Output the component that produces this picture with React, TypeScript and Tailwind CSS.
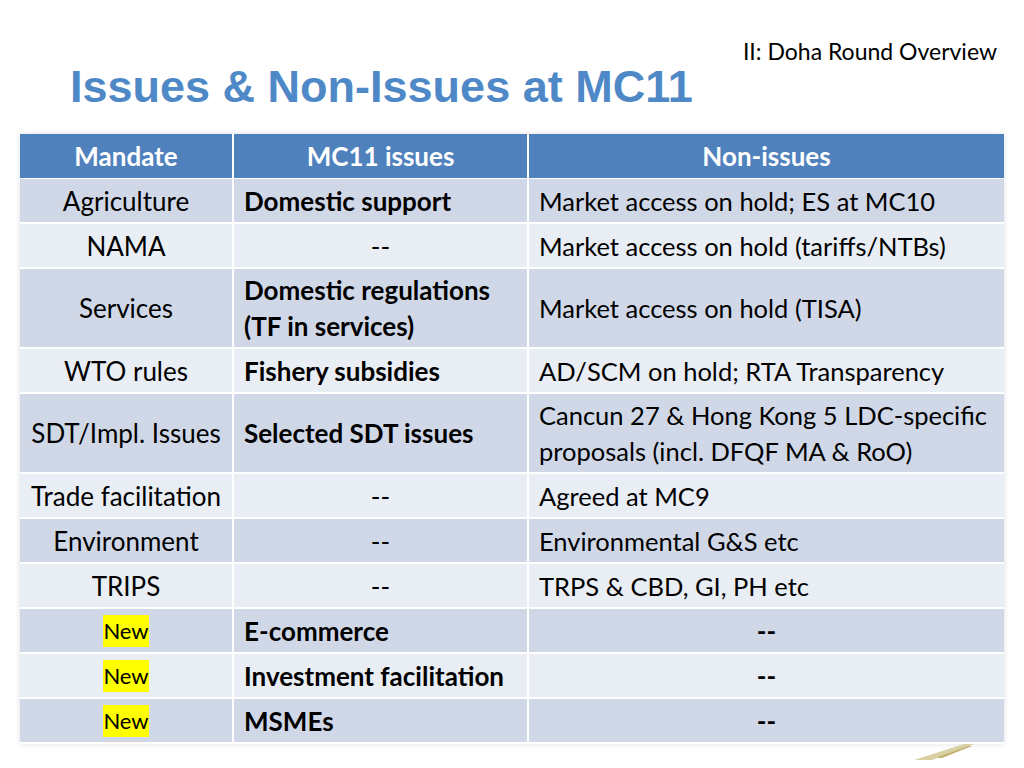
const rows: { mandate: string; isNew?: boolean; issue: string; non: string; tall?: boolean }[] = [
  { mandate: "Agriculture", issue: "Domestic support", non: "Market access on hold; ES at MC10" },
  { mandate: "NAMA", issue: "--", non: "Market access on hold (tariffs/NTBs)" },
  { mandate: "Services", issue: "Domestic regulations\n(TF in services)", non: "Market access on hold (TISA)", tall: true },
  { mandate: "WTO rules", issue: "Fishery subsidies", non: "AD/SCM on hold; RTA Transparency" },
  {
    mandate: "SDT/Impl. Issues",
    issue: "Selected SDT issues",
    non: "Cancun 27 & Hong Kong 5 LDC-specific\nproposals (incl. DFQF MA & RoO)",
    tall: true,
  },
  { mandate: "Trade facilitation", issue: "--", non: "Agreed at MC9" },
  { mandate: "Environment", issue: "--", non: "Environmental G&S etc" },
  { mandate: "TRIPS", issue: "--", non: "TRPS & CBD, GI, PH etc" },
  { mandate: "New", isNew: true, issue: "E-commerce", non: "--" },
  { mandate: "New", isNew: true, issue: "Investment facilitation", non: "--" },
  { mandate: "New", isNew: true, issue: "MSMEs", non: "--" },
];

const App = () => {
  return (
    <div className="w-[1024px] h-[768px] bg-white overflow-hidden font-['Lato',sans-serif] text-black">
      <div className="flex justify-end pr-[27px] pt-[37px] h-[58px]">
        <p className="text-[23px] leading-[29px]">II: Doha Round Overview</p>
      </div>
      <h1 className="pl-[70px] mt-[2px] h-[74px] font-['Liberation_Sans',sans-serif] font-bold text-[45px] leading-[54px] text-[#4f88c6]">
        Issues &amp; Non-Issues at MC11
      </h1>
      <div className="ml-[20px] w-[984px] shadow-[0_0_6px_rgba(0,0,0,0.12)]">
        <div className="grid grid-cols-[214px_295px_475px] h-[45px] bg-[#4f81bd] text-white font-bold text-[26px] border-b border-white">
          <div className="flex items-center justify-center border-r-2 border-white">Mandate</div>
          <div className="flex items-center justify-center border-r-2 border-white">MC11 issues</div>
          <div className="flex items-center justify-center">Non-issues</div>
        </div>
        {rows.map((r, i) => (
          <div
            key={i}
            className={`grid grid-cols-[214px_295px_475px] text-[26px] leading-[36px] border-b-2 border-white ${
              r.tall ? "h-[80px]" : "h-[45px]"
            } ${i % 2 === 0 ? "bg-[#d0d8e8]" : "bg-[#e9edf4]"}`}
          >
            <div className="flex items-center justify-center border-r-2 border-white">
              {r.isNew ? (
                <span className="bg-[#ffff00] text-[22px] leading-[32px]">{r.mandate}</span>
              ) : (
                r.mandate
              )}
            </div>
            <div
              className={`flex items-center border-r-2 border-white whitespace-pre-line ${
                r.issue === "--" ? "justify-center" : "pl-[10px] font-bold"
              }`}
            >
              {r.issue}
            </div>
            <div
              className={`flex items-center whitespace-pre-line ${
                r.non === "--" ? "justify-center font-bold" : "pl-[10px] text-[25.5px]"
              }`}
            >
              {r.non}
            </div>
          </div>
        ))}
      </div>
      <div className="flex justify-end pr-[50px]">
        <svg width="60" height="16" viewBox="0 0 60 16">
          <polygon points="18,16 60,0 50,0 0,16" fill="#d8cfa3" />
          <polygon points="22,14 54,2 58,2 28,14" fill="#bfae6e" />
        </svg>
      </div>
    </div>
  );
};

export default App;
